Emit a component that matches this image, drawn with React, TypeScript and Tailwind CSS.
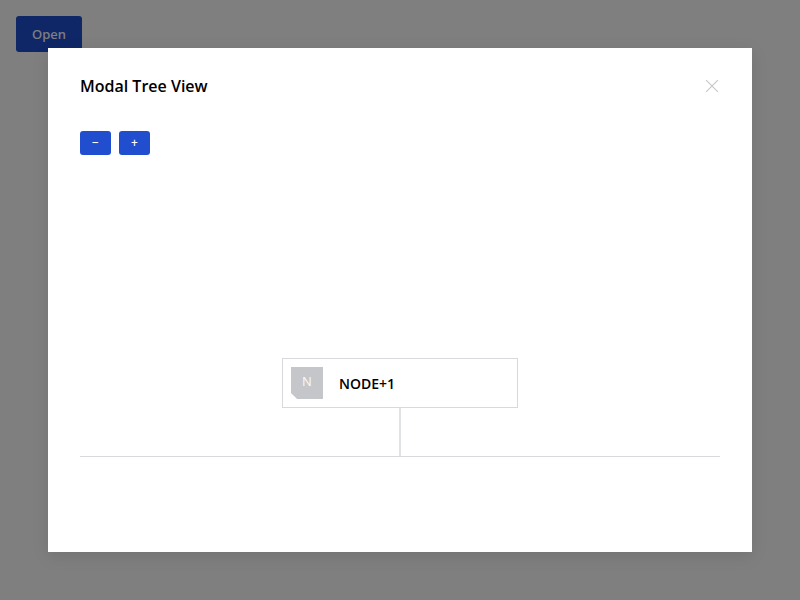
function ZoomButton({ label }: { label: string }) {
  return (
    <button className="flex h-6 w-[31px] items-center justify-center rounded-[3px] bg-[#204ecf] font-['Noto_Sans','Open_Sans',sans-serif] text-[12px] leading-4 font-medium text-white">
      {label}
    </button>
  );
}

function TreeNode({ initial, name }: { initial: string; name: string }) {
  return (
    <div className="flex h-[50px] w-[236px] shrink-0 items-center border border-[#d8d9dc] bg-white pl-2">
      <div className="flex size-8 items-center justify-center bg-[#c4c6ca] pb-1 text-[13px] leading-5 text-white/90 [clip-path:polygon(0_0,100%_0,100%_100%,19%_100%,0_81%)]">
        {initial}
      </div>
      <span className="ml-4 pt-0.5 text-sm font-semibold text-black">{name}</span>
    </div>
  );
}

export default function App() {
  return (
    <div className="relative h-[600px] w-[800px] overflow-hidden bg-white p-4 font-['Open_Sans','Noto_Sans',sans-serif]">
      <button className="flex h-9 w-[66px] items-center justify-center rounded-[3px] bg-[#204ecf] pt-0.5 font-['Noto_Sans','Open_Sans',sans-serif] text-[13px] font-medium text-white">
        Open
      </button>
      <div className="absolute inset-0 flex bg-black/50 p-12">
        <section
          role="dialog"
          className="flex flex-1 flex-col bg-white px-8 pt-[26px] shadow-[0_4px_16px_rgba(0,0,0,0.1)]"
        >
          <header className="flex h-6 items-center justify-between">
            <h1 className="text-base leading-6 font-semibold text-black">Modal Tree View</h1>
            <button aria-label="Close" className="mr-[2px]">
              <svg
                width="12"
                height="12"
                viewBox="0 0 12 12"
                fill="none"
                stroke="#c4c6ca"
                strokeWidth="1.1"
                className="block"
              >
                <path d="M0 0L12 12M12 0L0 12" />
              </svg>
            </button>
          </header>
          <div className="mt-[33px] flex gap-2">
            <ZoomButton label="−" />
            <ZoomButton label="+" />
          </div>
          <div className="mt-[203px] flex flex-col items-center">
            <TreeNode initial="N" name="NODE+1" />
            <div className="h-12 w-0.5 bg-[#e1e2e4]" />
            <div className="h-px w-full bg-[#d8d9dc]" />
          </div>
        </section>
      </div>
    </div>
  );
}
